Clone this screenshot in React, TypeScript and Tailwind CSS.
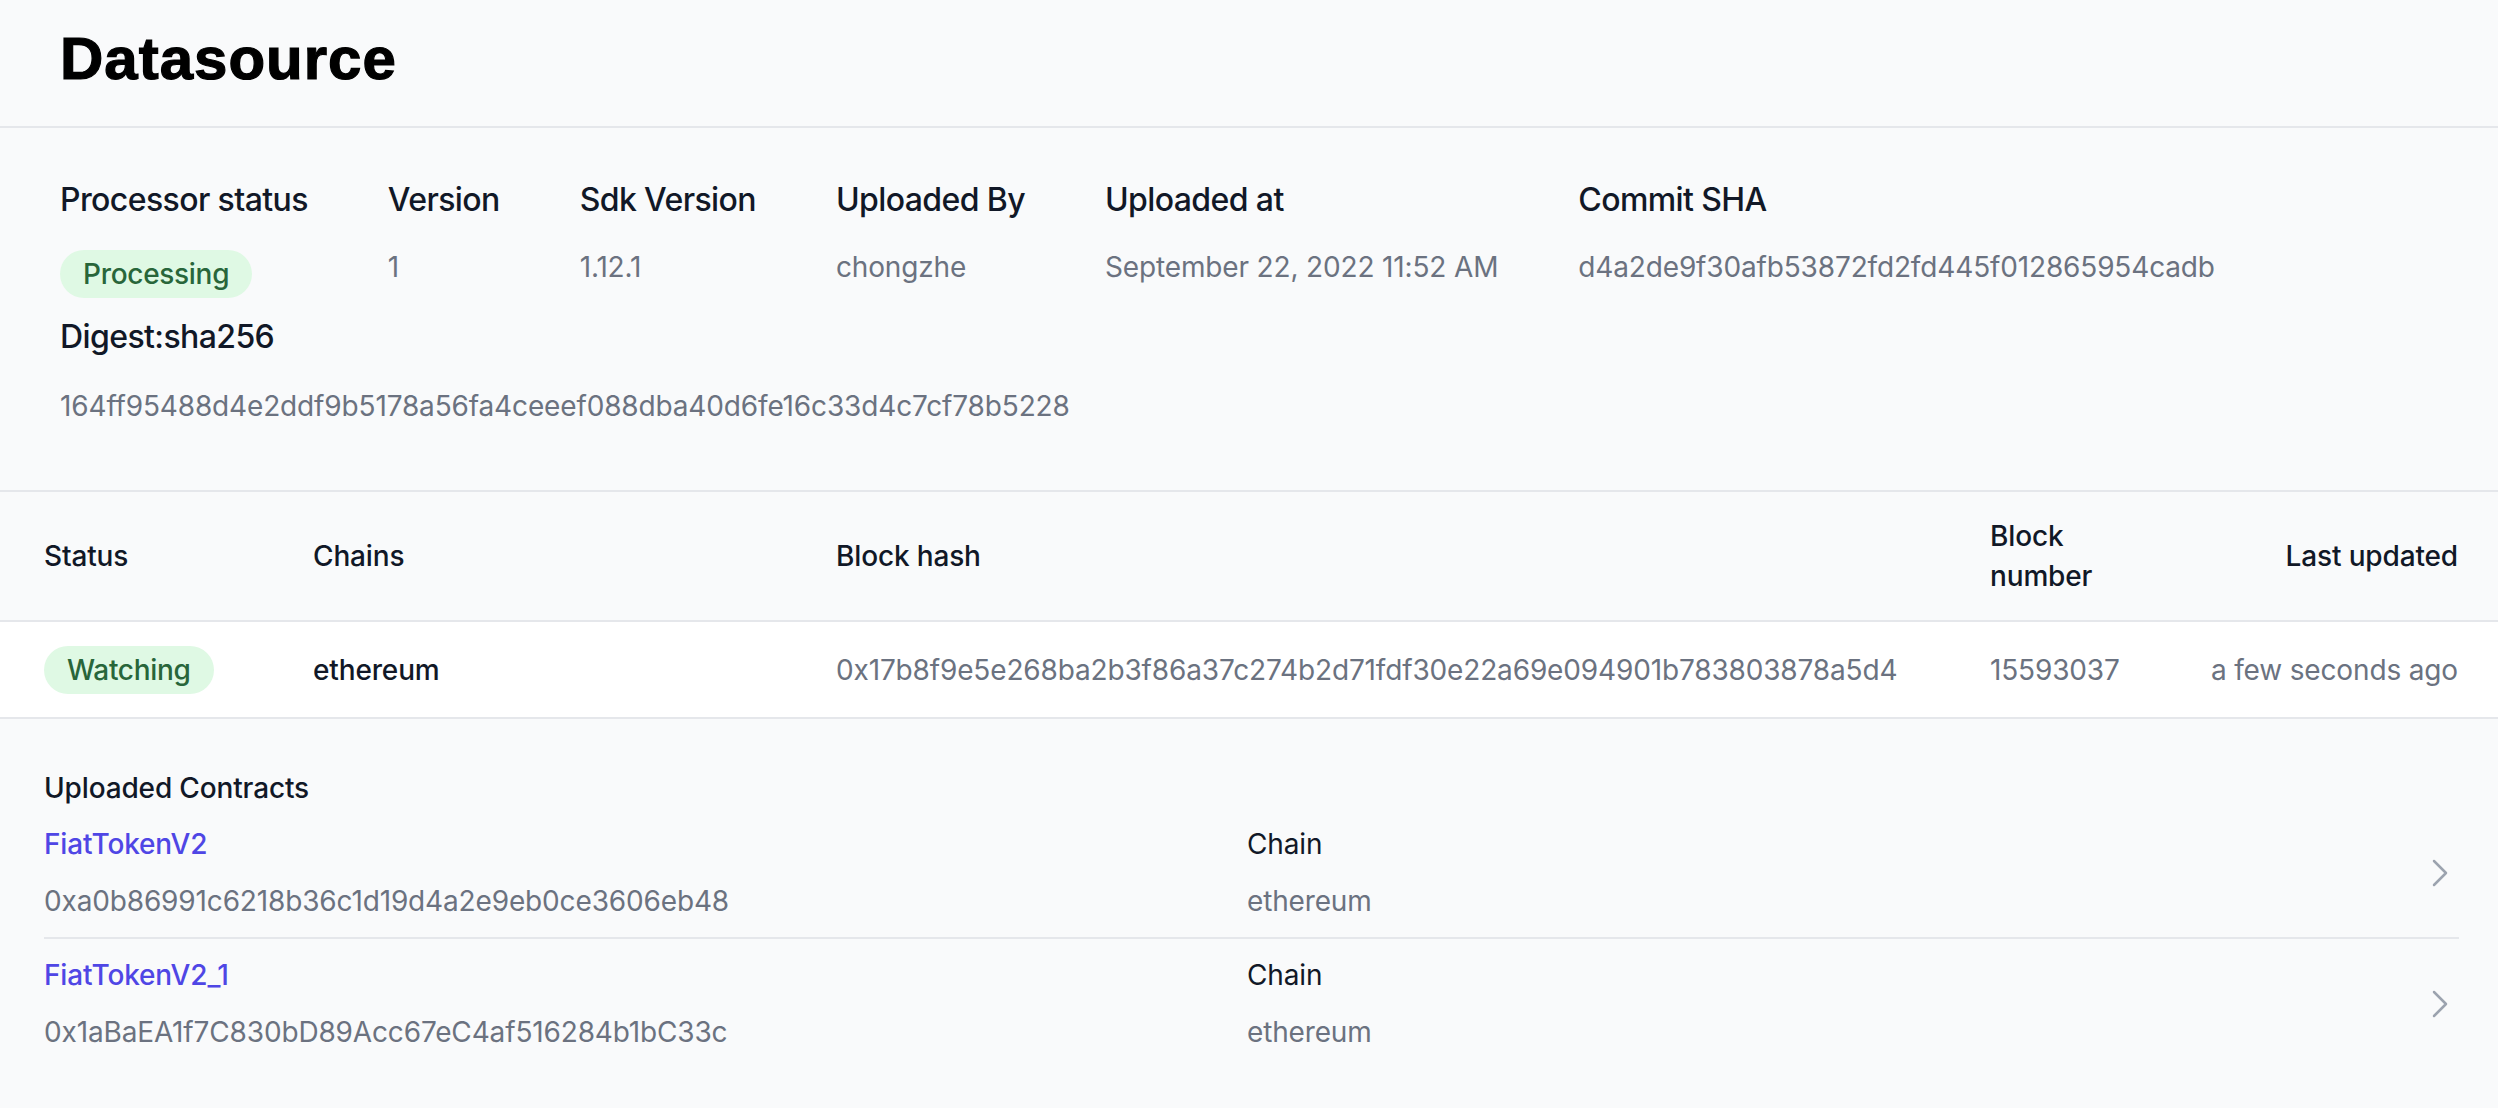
import React from 'react';

const infoCols = [
  { label: 'Processor status', value: null },
  { label: 'Version', value: '1' },
  { label: 'Sdk Version', value: '1.12.1' },
  { label: 'Uploaded By', value: 'chongzhe' },
  { label: 'Uploaded at', value: 'September 22, 2022 11:52 AM' },
  { label: 'Commit SHA', value: 'd4a2de9f30afb53872fd2fd445f012865954cadb' },
];

const contracts = [
  {
    name: 'FiatTokenV2',
    address: '0xa0b86991c6218b36c1d19d4a2e9eb0ce3606eb48',
    chain: 'ethereum',
  },
  {
    name: 'FiatTokenV2_1',
    address: '0x1aBaEA1f7C830bD89Acc67eC4af516284b1bC33c',
    chain: 'ethereum',
  },
];

function StatusBadge({ children }: { children: React.ReactNode }) {
  return (
    <span className="inline-flex h-[48px] items-center rounded-full bg-[#dff9e4] px-[23px] text-[28px] font-medium leading-[40px] tracking-[-0.3px] text-[#28663a]">
      {children}
    </span>
  );
}

function Chevron() {
  return (
    <svg width="18" height="30" viewBox="0 0 18 30" fill="none" className="text-[#9ca3af]">
      <polyline
        points="3,3 15,15 3,27"
        stroke="currentColor"
        strokeWidth="2.5"
        strokeLinecap="round"
        strokeLinejoin="round"
      />
    </svg>
  );
}

export default function App() {
  return (
    <div className="min-h-screen bg-[#f9fafb] font-['Inter',sans-serif] tracking-[-0.15px] text-[#111827]">
      {/* Header */}
      <header className="h-[128px] border-b-2 border-[#e5e7eb] px-[60px] pt-[23px]">
        <h1 className="font-['Liberation_Sans',Arial,sans-serif] text-[60px] font-bold leading-[72px] tracking-[1px] text-black [-webkit-text-stroke:1.2px_black]">
          Datasource
        </h1>
      </header>

      {/* Processor info */}
      <section className="border-b-2 border-[#e5e7eb] px-[60px] pb-[64px] pt-[48px]">
        <div className="flex items-start gap-[80px]">
          {infoCols.map((c) => (
            <div key={c.label} className="flex flex-col">
              <span className="text-[32px] font-medium leading-[48px] tracking-[-0.6px] text-[#111827]">{c.label}</span>
              {c.value === null ? (
                <div className="mt-[26px]">
                  <StatusBadge>Processing</StatusBadge>
                </div>
              ) : (
                <span className="mt-[23px] text-[28px] leading-[40px] text-[#6b7280]">{c.value}</span>
              )}
            </div>
          ))}
        </div>
        <div className="mt-[15px] text-[32px] font-medium leading-[48px] tracking-[-0.6px] text-[#111827]">Digest:sha256</div>
        <div className="mt-[25px] text-[28px] leading-[40px] text-[#6b7280]">
          164ff95488d4e2ddf9b5178a56fa4ceeef088dba40d6fe16c33d4c7cf78b5228
        </div>
      </section>

      {/* Chain status table */}
      <section>
        <div className="grid grid-cols-[269px_523px_1154px_1fr_auto] items-center border-b-2 border-[#e5e7eb] py-[24px] pl-[44px] pr-[40px] text-[28px] font-medium leading-[40px] text-[#111827]">
          <div>Status</div>
          <div>Chains</div>
          <div>Block hash</div>
          <div className="max-w-[150px]">Block number</div>
          <div className="text-right">Last updated</div>
        </div>
        <div className="grid grid-cols-[269px_523px_1154px_1fr_auto] items-center border-b-2 border-[#e5e7eb] bg-white pb-[23px] pl-[44px] pr-[40px] pt-[24px] text-[28px] leading-[40px]">
          <div>
            <StatusBadge>Watching</StatusBadge>
          </div>
          <div className="font-medium text-[#111827]">ethereum</div>
          <div className="text-[#6b7280]">0x17b8f9e5e268ba2b3f86a37c274b2d71fdf30e22a69e094901b783803878a5d4</div>
          <div className="text-[#6b7280]">15593037</div>
          <div className="text-right text-[#6b7280]">a few seconds ago</div>
        </div>
      </section>

      {/* Uploaded contracts */}
      <section className="pb-[40px] pl-[44px] pr-[39px] pt-[49px]">
        <div className="text-[28px] font-medium leading-[40px] text-[#111827]">Uploaded Contracts</div>
        <ul>
          {contracts.map((c, i) => (
            <li
              key={c.name}
              className={`grid grid-cols-[1203px_1fr_auto] items-center py-[16px] ${
                i < contracts.length - 1 ? 'border-b-2 border-[#e5e7eb]' : ''
              }`}
            >
              <div className="flex flex-col">
                <span className="text-[28px] font-medium leading-[40px] text-[#4f46e5]">{c.name}</span>
                <span className="mt-[17px] text-[28px] leading-[40px] text-[#6b7280]">{c.address}</span>
              </div>
              <div className="flex flex-col">
                <span className="text-[28px] leading-[40px] text-[#111827]">Chain</span>
                <span className="mt-[17px] text-[28px] leading-[40px] text-[#6b7280]">{c.chain}</span>
              </div>
              <div className="pr-[10px]">
                <Chevron />
              </div>
            </li>
          ))}
        </ul>
      </section>
    </div>
  );
}
